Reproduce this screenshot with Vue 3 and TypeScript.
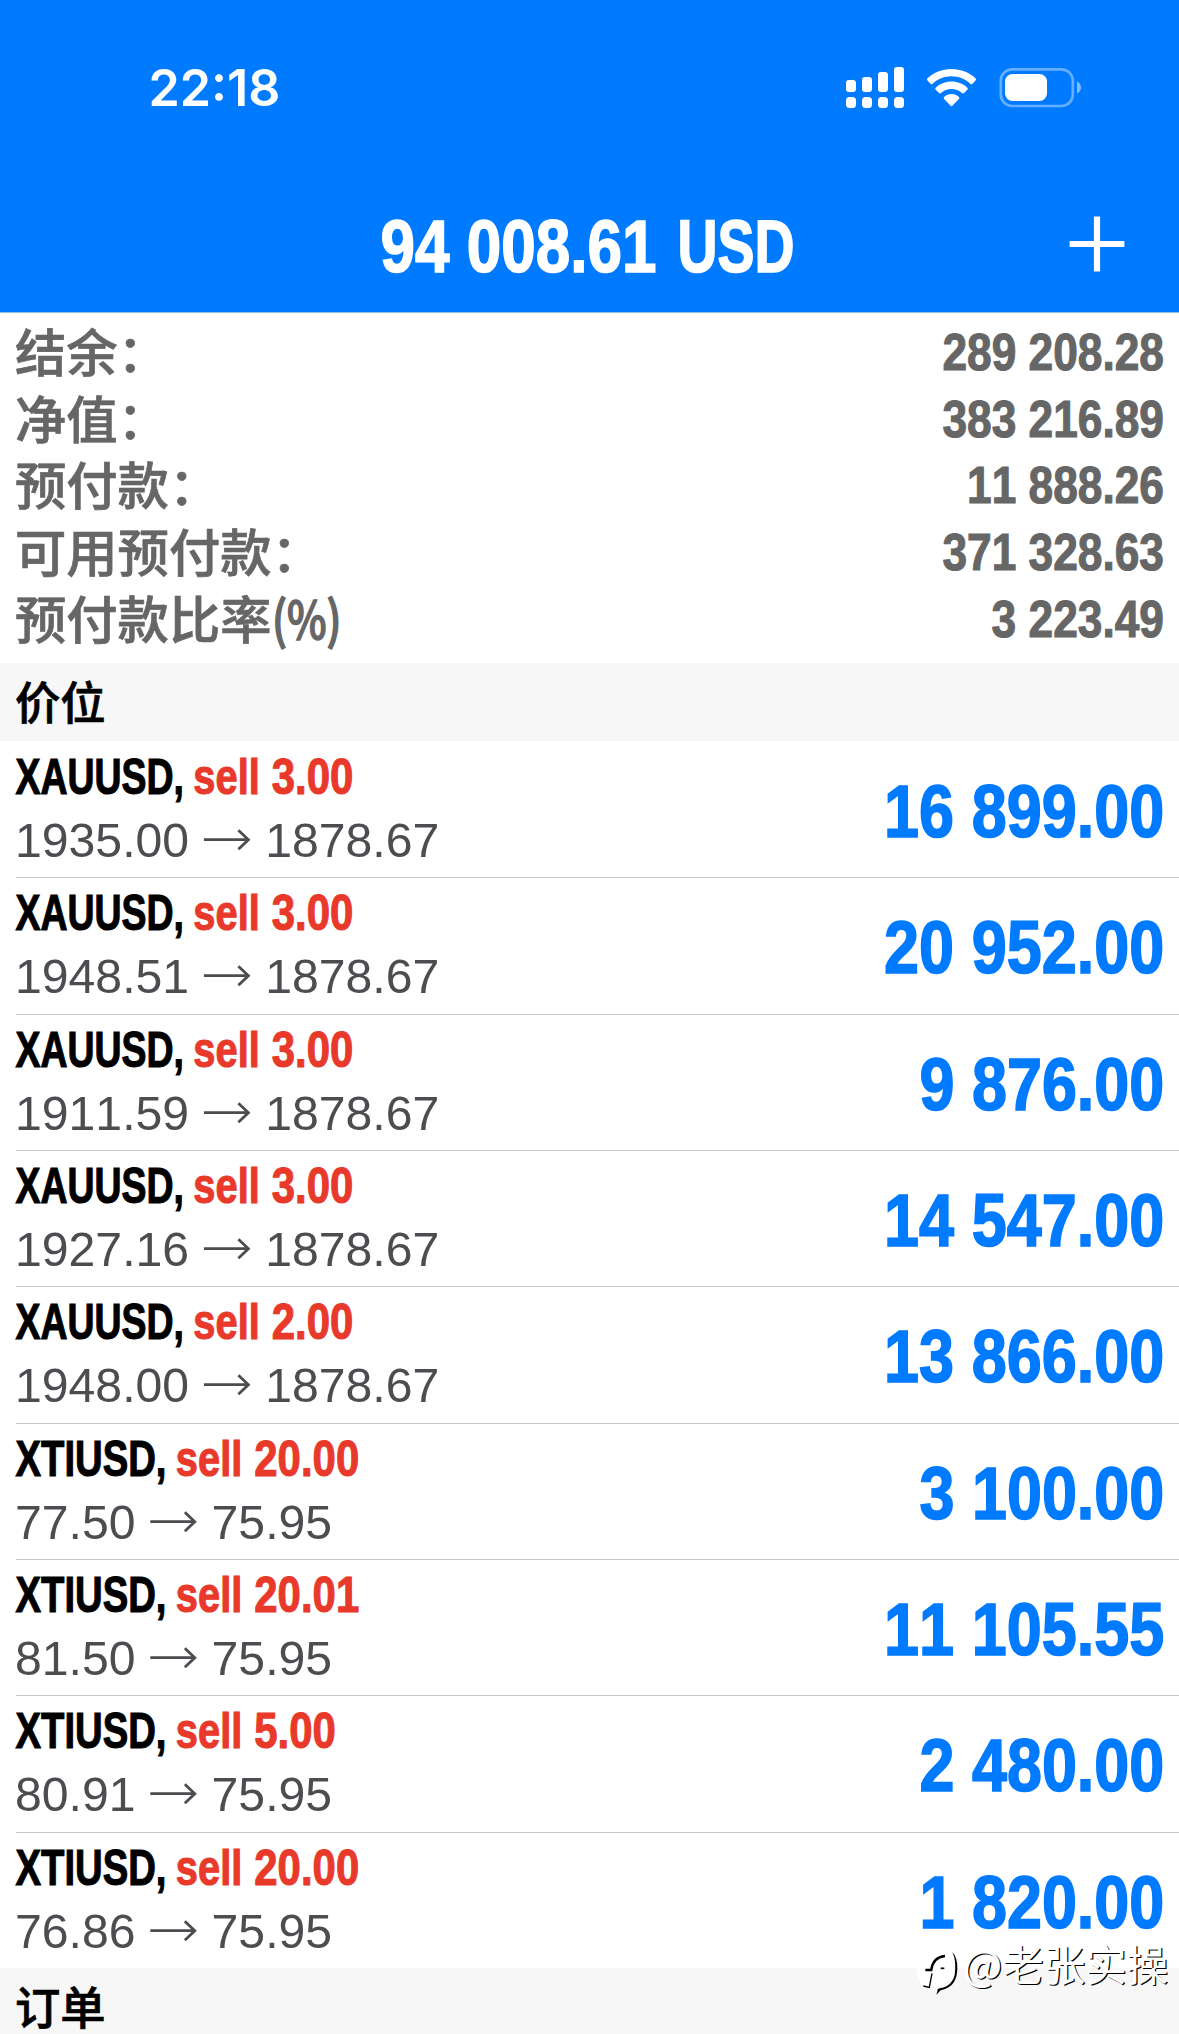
<script setup lang="ts">
interface Balance {
  label: string
  suffix?: string
  value: string
}
interface Position {
  symbol: string
  volume: string
  open: string
  current: string
  profit: string
}

const balances: Balance[] = [
  { label: '结余：', value: '289 208.28' },
  { label: '净值：', value: '383 216.89' },
  { label: '预付款：', value: '11 888.26' },
  { label: '可用预付款：', value: '371 328.63' },
  { label: '预付款比率', suffix: '(%)', value: '3 223.49' },
]

const positions: Position[] = [
  { symbol: 'XAUUSD', volume: '3.00', open: '1935.00', current: '1878.67', profit: '16 899.00' },
  { symbol: 'XAUUSD', volume: '3.00', open: '1948.51', current: '1878.67', profit: '20 952.00' },
  { symbol: 'XAUUSD', volume: '3.00', open: '1911.59', current: '1878.67', profit: '9 876.00' },
  { symbol: 'XAUUSD', volume: '3.00', open: '1927.16', current: '1878.67', profit: '14 547.00' },
  { symbol: 'XAUUSD', volume: '2.00', open: '1948.00', current: '1878.67', profit: '13 866.00' },
  { symbol: 'XTIUSD', volume: '20.00', open: '77.50', current: '75.95', profit: '3 100.00' },
  { symbol: 'XTIUSD', volume: '20.01', open: '81.50', current: '75.95', profit: '11 105.55' },
  { symbol: 'XTIUSD', volume: '5.00', open: '80.91', current: '75.95', profit: '2 480.00' },
  { symbol: 'XTIUSD', volume: '20.00', open: '76.86', current: '75.95', profit: '1 820.00' },
]

// Width of a number set with tabular digits and narrower spaces and points
function measure(text: string, digit: number, gap: number): number {
  return [...text].reduce((sum, c) => sum + (c === ' ' || c === '.' ? gap : digit), 0)
}

const symbolWidth: Record<string, number> = { XAUUSD: 168.5, XTIUSD: 151 }
const sideX = (p: Position) => 16 + symbolWidth[p.symbol] + 8.8
const arrowX = (p: Position) => 15 + measure(p.open, 26.8, 13.3) + 14.8
</script>

<template>
  <div class="screen">
    <header class="header">
      <div class="status">
        <svg class="clock" width="160" height="60" viewBox="0 0 160 60">
          <text x="-1.5" y="46" textLength="132" lengthAdjust="spacingAndGlyphs">22:18</text>
        </svg>
        <svg width="240" height="60" viewBox="0 0 240 60" fill="#fff">
          <g>
            <rect x="6" y="20" width="10" height="12" rx="3" />
            <rect x="22" y="17" width="10" height="15" rx="3" />
            <rect x="38" y="12" width="10" height="20" rx="3" />
            <rect x="54" y="7" width="10" height="25" rx="3" />
            <rect v-for="x in [6, 22, 38, 54]" :key="x" :x="x" y="37" width="10" height="11" rx="3.5" />
          </g>
          <path d="M111.500 9C121 9 129.500 12.500 135.500 18.300Q136.600 19.400 135.500 20.500L132.500 23.700Q131.400 24.700 130.300 23.700C125.300 19 118.700 16.300 111.500 16.300S97.700 19 92.700 23.700Q91.600 24.700 90.500 23.700L87.500 20.500Q86.400 19.400 87.500 18.300C93.500 12.500 102 9 111.500 9Z" />
          <path d="M111.500 21.500C117.700 21.500 123.300 23.800 127.300 27.700Q128.300 28.700 127.300 29.800L124 33.100Q123 34 121.900 33.100C119.100 30.500 115.500 29 111.500 29S103.900 30.500 101.100 33.100Q100 34 99 33.100L95.700 29.800Q94.700 28.700 95.700 27.700C99.700 23.800 105.300 21.500 111.500 21.500Z" />
          <path d="M111.500 34C114.500 34 117.200 35.100 118.900 36.900Q119.900 37.900 118.900 38.900L112.600 45.600Q111.500 46.700 110.400 45.600L104.100 38.900Q103.100 37.900 104.100 36.900C105.800 35.100 108.500 34 111.500 34Z" />
          <rect x="160.800" y="9.300" width="72" height="36.700" rx="11.500" fill="none" stroke="#fff" stroke-opacity=".4" stroke-width="2.700" />
          <rect x="165" y="14" width="42" height="27" rx="7.500" />
          <path d="M237 21.500C239.600 22.500 241 25 241 27.500S239.600 32.500 237 33.500Z" fill-opacity=".5" />
        </svg>
      </div>
      <div class="bar">
        <svg class="title" width="420" height="80" viewBox="0 0 420 80">
          <text x="-.5" y="61.500" textLength="276" lengthAdjust="spacingAndGlyphs">94 008.61</text>
          <text x="296.500" y="61.500" textLength="117" lengthAdjust="spacingAndGlyphs">USD</text>
        </svg>
        <svg class="plus" width="56" height="56" viewBox="0 0 56 56">
          <path d="M28 .6V55.400M.6 28H55.400" stroke="#fff" stroke-width="6.200" />
        </svg>
      </div>
    </header>

    <section class="summary">
      <div v-for="b in balances" :key="b.label" class="balance">
        <span class="label">{{ b.label }}<span v-if="b.suffix" class="suffix">{{ b.suffix }}</span></span>
        <svg class="amount" width="300" height="66" viewBox="0 0 300 66">
          <text x="285" y="53" text-anchor="end" :textLength="measure(b.value, 24.6, 12.4)" lengthAdjust="spacingAndGlyphs">{{ b.value }}</text>
        </svg>
      </div>
    </section>

    <h2 class="section">价位</h2>
    <div class="positions">
      <div v-for="(p, i) in positions" :key="i" class="position">
        <svg width="620" height="134" viewBox="0 0 620 134">
          <g class="name">
            <text x="15.500" y="52.500" :textLength="symbolWidth[p.symbol]" lengthAdjust="spacingAndGlyphs">{{ p.symbol }},</text>
            <g class="sell">
              <text :x="sideX(p)" y="52.500" textLength="66.500" lengthAdjust="spacingAndGlyphs">sell</text>
              <text :x="sideX(p) + 78.5" y="52.500" :textLength="measure(p.volume, 23.3, 11.7)" lengthAdjust="spacingAndGlyphs">{{ p.volume }}</text>
            </g>
          </g>
          <g class="price">
            <text x="15" y="115.700" :textLength="measure(p.open, 26.8, 13.3)" lengthAdjust="spacingAndGlyphs">{{ p.open }}</text>
            <path :transform="`translate(${arrowX(p)} 98.7)`" d="M0 0H44.500M34.500-9.500L44.500 0L34.500 9.500" />
            <text :x="arrowX(p) + 61.3" y="115.700" :textLength="measure(p.current, 26.8, 13.3)" lengthAdjust="spacingAndGlyphs">{{ p.current }}</text>
          </g>
        </svg>
        <svg class="profit" width="400" height="134" viewBox="0 0 400 134">
          <text x="385.300" y="95.700" text-anchor="end" :textLength="measure(p.profit, 35.4, 16.2)" lengthAdjust="spacingAndGlyphs">{{ p.profit }}</text>
        </svg>
      </div>
    </div>
    <h2 class="section last">订单</h2>

    <div class="watermark">
      <svg width="53" height="64" viewBox="0 0 159 192">
        <path fill="#fff" d="M20 92Q20 68 44 52Q66 32 96 30Q128 30 140 58Q146 98 128 126Q108 146 84 150L78 164L74 142L50 144Q22 126 20 92Z" />
        <g fill="none" stroke="#000">
          <path d="M46 90H64Q68 52 105 48" stroke-width="7" />
          <path d="M66 100L58 142L40 138" stroke-width="4" />
          <path d="M92 85H103" stroke-width="5" />
        </g>
        <path d="M127 36Q143 52 142 88Q140 142 92 151L79 164L84 146Q125 141 134 105Q140 62 127 36Z" />
      </svg>
      <span>@老张实操</span>
    </div>
  </div>
</template>

<style>
body {
  background: #fff;
}
</style>

<style scoped>
.screen {
  position: relative;
  width: 1179px;
  height: 2034px;
  overflow: hidden;
  background: #fff;
  font-family: "Liberation Sans", "Noto Sans CJK SC", sans-serif;
  font-kerning: none;
}
svg {
  display: block;
  flex: none;
  overflow: visible;
}
.header {
  box-sizing: border-box;
  height: 313px;
  padding-top: 60px;
  background: #007aff;
  border-bottom: 1px solid #8ebff2;
}
.status {
  display: flex;
  justify-content: space-between;
  padding: 0 99px 0 150px;
}
.clock {
  fill: #fff;
  font: 600 50.500px Inter, sans-serif;
}
.bar {
  display: flex;
  justify-content: space-between;
  align-items: flex-start;
  height: 80px;
  margin-top: 90px;
  padding: 0 54px 0 381px;
}
.title,
.amount,
.name,
.profit {
  font-weight: 700;
}
.title {
  fill: #fff;
  stroke: #fff;
  stroke-width: 1.600;
  font-size: 73.500px;
}
.plus {
  margin-top: 6px;
}
.summary {
  height: 346px;
  padding-top: 4px;
}
.balance {
  display: flex;
  justify-content: space-between;
  height: 66.670px;
  padding-left: 15px;
  color: #666;
}
.label {
  font: 500 51.300px/66px "Noto Sans CJK SC", sans-serif;
  white-space: nowrap;
  -webkit-text-stroke: .7px #666;
}
.suffix {
  display: inline-block;
  transform: scaleX(.82);
  transform-origin: left;
  -webkit-text-stroke-width: 1.600px;
}
.amount {
  fill: #666;
  stroke: #666;
  stroke-width: 1.100;
  font-size: 52px;
}
.section {
  height: 78px;
  margin: 0;
  padding-left: 15px;
  background: #f7f7f7;
  color: #000;
  font: 500 45.300px/74px "Noto Sans CJK SC", sans-serif;
  -webkit-text-stroke: .7px #000;
}
.positions {
  height: 1227px;
}
.position {
  position: relative;
  display: flex;
  justify-content: space-between;
  height: 136.330px;
}
.position:not(:last-child)::after {
  content: "";
  position: absolute;
  right: 0;
  bottom: -1px;
  left: 16px;
  height: 1px;
  background: #c8c8cb;
}
.name {
  font-size: 50px;
  stroke: #000;
  stroke-width: 1.100;
}
.sell {
  fill: #e8392a;
  stroke: #e8392a;
}
.price {
  fill: #4c4c51;
  font-size: 48.600px;
}
.price path {
  fill: none;
  stroke: #4c4c51;
  stroke-width: 2.800;
}
.profit {
  fill: #007aff;
  stroke: #007aff;
  stroke-width: 1.600;
  font-size: 73.500px;
}
.watermark {
  position: absolute;
  top: 1940px;
  left: 910px;
  display: flex;
  color: #fff;
  font: 400 41.500px/50px "Noto Sans CJK SC", sans-serif;
  text-shadow: 1.200px 1.200px 0 #000;
  white-space: nowrap;
}
.watermark span {
  margin-top: -2px;
}
</style>
